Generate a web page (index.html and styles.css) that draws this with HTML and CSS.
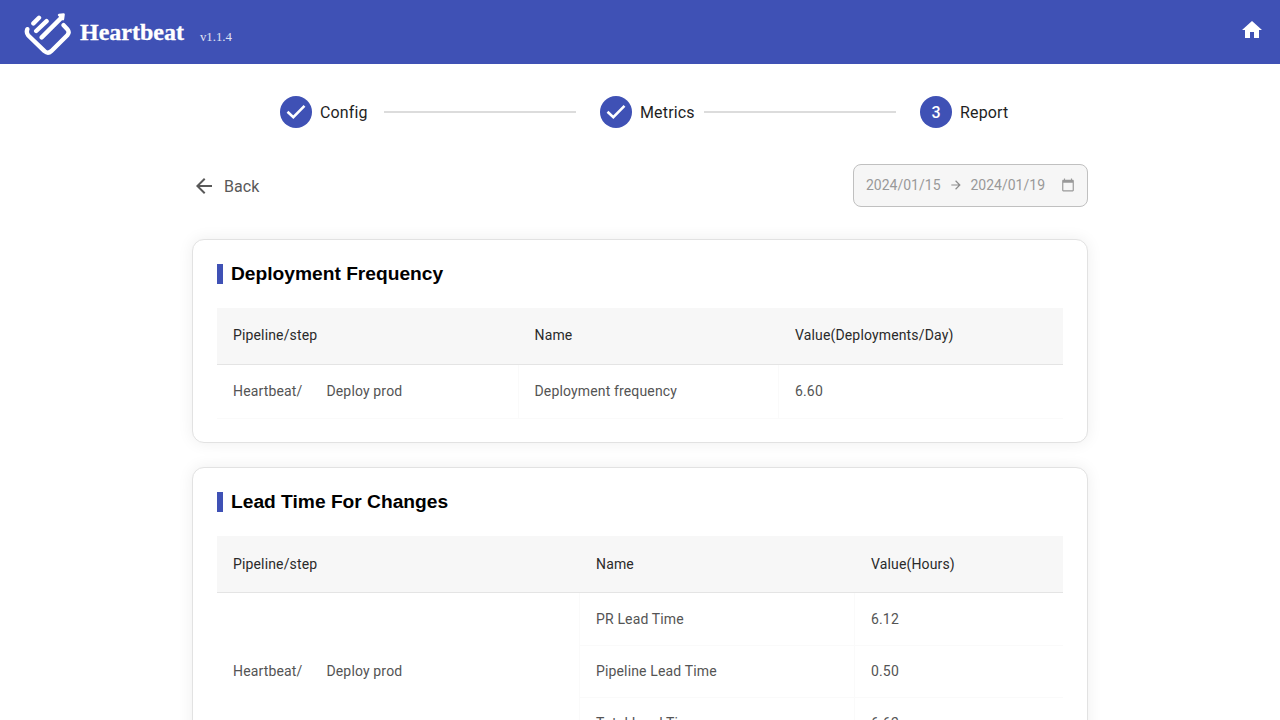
FILE: index.html
```html
<!DOCTYPE html>
<html lang="en">
<head>
<meta charset="utf-8">
<title>Heartbeat</title>
<link rel="stylesheet" href="styles.css">
</head>
<body>
<header class="header">
  <div class="brand">
    <svg class="logo" width="50" height="46" viewBox="23 11 50 46" fill="none" stroke="#fff" stroke-width="4.4" stroke-linecap="round" stroke-linejoin="round">
      <path d="M27.3 29.2Q26 33 28.3 35.5L44.5 51.2Q48 54.2 51.2 51.2L67.3 35.2Q69.800 32.3 67.600 29.5L63.6 25.2M33.4 23.4L39 17.8M36.2 31L46.6 21.2M41.7 37.4L61 18.1"/>
      <path d="M59 15L63.6 14.5L63 19.2Z" stroke-width="2.400" fill="#fff"/>
    </svg>
    <span class="brand-name">Heartbeat</span>
    <span class="version">v1.1.4</span>
  </div>
  <svg class="home" width="24" height="24" viewBox="0 0 24 24" fill="#fff"><path d="M10 20v-6h4v6h5v-8h3L12 3 2 12h3v8z"/></svg>
</header>
<main class="page">
  <div class="stepper">
    <div class="step"><svg class="step-icon" viewBox="0 0 32 32"><circle cx="16" cy="16" r="16"/><path d="M7.5 15.8L13.3 21.1L24.5 9.9"/></svg><span class="step-label">Config</span></div>
    <div class="connector"></div>
    <div class="step"><svg class="step-icon" viewBox="0 0 32 32"><circle cx="16" cy="16" r="16"/><path d="M7.5 15.8L13.3 21.1L24.5 9.9"/></svg><span class="step-label">Metrics</span></div>
    <div class="connector"></div>
    <div class="step"><span class="step-number">3</span><span class="step-label">Report</span></div>
  </div>
  <div class="toolbar">
    <div class="back">
      <svg width="24" height="24" viewBox="0 0 24 24" fill="#595959"><path d="M20 11H7.83l5.59-5.59L12 4l-8 8 8 8 1.41-1.41L7.83 13H20v-2z"/></svg>
      <span>Back</span>
    </div>
    <div class="date-range">
      <span>2024/01/15</span>
      <svg class="range-arrow" width="14" height="14" viewBox="0 0 24 24" fill="#8b8b8b"><path d="m12 4-1.41 1.41L16.17 11H4v2h12.17l-5.58 5.59L12 20l8-8z"/></svg>
      <span>2024/01/19</span>
      <svg class="calendar" width="14" height="14" viewBox="0 0 24 24" fill="#999"><path d="M20 3h-1V1h-2v2H7V1H5v2H4c-1.100 0-2 .9-2 2v16c0 1.100.9 2 2 2h16c1.100 0 2-.9 2-2V5c0-1.100-.9-2-2-2zm0 18H4V8h16v13z"/></svg>
    </div>
  </div>
  <section class="card">
    <h2 class="card-title">Deployment Frequency</h2>
    <table class="report frequency">
      <colgroup><col class="col-step"><col class="col-name"><col></colgroup>
      <thead><tr><th>Pipeline/step</th><th>Name</th><th>Value(Deployments/Day)</th></tr></thead>
      <tbody><tr><td>Heartbeat/<span class="step-name">Deploy prod</span></td><td>Deployment frequency</td><td>6.60</td></tr></tbody>
    </table>
  </section>
  <section class="card">
    <h2 class="card-title">Lead Time For Changes</h2>
    <table class="report lead-time">
      <colgroup><col class="col-step"><col class="col-name"><col></colgroup>
      <thead><tr><th>Pipeline/step</th><th>Name</th><th>Value(Hours)</th></tr></thead>
      <tbody>
        <tr><td rowspan="3">Heartbeat/<span class="step-name">Deploy prod</span></td><td>PR Lead Time</td><td>6.12</td></tr>
        <tr><td>Pipeline Lead Time</td><td>0.50</td></tr>
        <tr><td>Total Lead Time</td><td>6.62</td></tr>
      </tbody>
    </table>
  </section>
</main>
</body>
</html>
```

FILE: styles.css
```css
* { box-sizing: border-box; }
body {
  margin: 0;
  height: 720px;
  overflow: hidden;
  background: #fff;
  color: #1f1f1f;
  font-family: Roboto, "Liberation Sans", sans-serif;
}
.header {
  display: flex;
  align-items: center;
  justify-content: space-between;
  height: 64px;
  padding: 0 16px 0 23px;
  background: #3f51b5;
  font-family: "Liberation Serif", serif;
}
.brand { display: flex; align-items: center; color: #fff; }
.logo { margin-top: 4px; }
.brand-name { margin-left: 7px; font-size: 24px; font-weight: 700; line-height: 28px; -webkit-text-stroke: 0.3px #fff; }
.version { margin: 9px 0 0 16px; font-size: 12.8px; line-height: 16px; color: #e1e4f3; }
.home { margin-bottom: 4px; }
.page { padding: 32px 192px 0; }
.stepper { display: flex; align-items: center; padding-left: 88px; }
.step { display: flex; align-items: center; gap: 8px; width: 104px; font-size: 16px; line-height: 24px; letter-spacing: 0.15px; }
.step-label { padding-top: 2px; }
.step-icon { width: 32px; height: 32px; flex: none; }
.step-icon circle { fill: #3f51b5; }
.step-icon path { fill: none; stroke: #fff; stroke-width: 2.6; }
.step-number {
  width: 32px;
  height: 32px;
  padding-top: 1px;
  border-radius: 50%;
  background: #3f51b5;
  color: #fff;
  font-weight: 500;
  line-height: 32px;
  text-align: center;
}
.connector { width: 192px; height: 2px; margin-right: 24px; background: #dcdcdc; }
.toolbar { display: flex; justify-content: space-between; margin: 36px 0 30.5px; }
.back { display: flex; align-items: center; gap: 8px; height: 44px; color: #595959; font-size: 16px; letter-spacing: 0.05px; }
.date-range {
  display: flex;
  align-items: center;
  width: 235px;
  height: 43px;
  padding: 0 12px;
  border: 1px solid #c0c0c0;
  border-radius: 8px;
  background: #f6f6f6;
  color: #999;
  font-size: 14px;
}
.date-range span { padding-bottom: 2px; }
.range-arrow { margin: 0 8px 1px; }
.calendar { margin-left: auto; margin-bottom: 1px; }
.card {
  height: 204px;
  margin-bottom: 24.5px;
  padding: 24px;
  border: 1px solid #e2e2e2;
  border-radius: 12px;
  background: #fff;
  box-shadow: 0 0 16px rgba(0, 0, 0, 0.07);
}
.card + .card { height: 300px; }
.card-title {
  margin: 0 0 24px;
  padding-left: 8px;
  border-left: 6px solid #3f51b5;
  color: #000;
  font: 700 19.2px/20px "Liberation Sans", sans-serif;
}
.report { width: 846px; table-layout: fixed; border-collapse: separate; border-spacing: 0; font-size: 14px; letter-spacing: 0.15px; }
.report th { height: 57px; padding: 0 16px 1px; border-bottom: 1px solid #e4e4e4; background: #f7f7f7; color: #2a2a2a; font-weight: 400; text-align: left; }
.report td { height: 52.5px; padding: 0 16px; border-right: 1px solid #fafafa; border-bottom: 1px solid #fafafa; color: #545454; }
.report td:last-child { border-right: 0; }
.frequency .col-step { width: 301.5px; }
.frequency .col-name { width: 260.5px; }
.frequency th { padding-bottom: 2px; }
.frequency td { height: 54px; padding-bottom: 1px; }
.lead-time .col-step { width: 363px; }
.lead-time .col-name { width: 275px; }
.lead-time td { padding-bottom: 1px; }
.lead-time tr:first-child td:not([rowspan]) { padding-bottom: 0; }
.step-name { margin-left: 24px; }
```
